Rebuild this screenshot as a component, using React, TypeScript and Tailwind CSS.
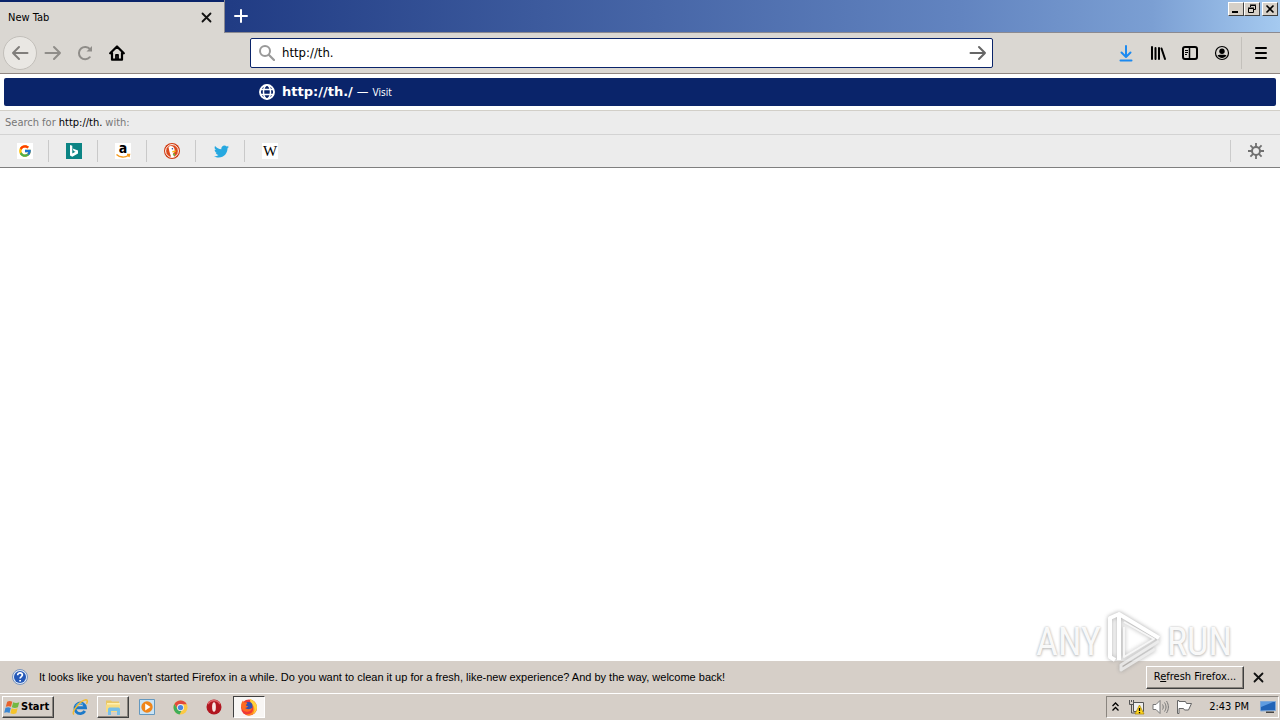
import React from "react";
import { FaTwitter } from "react-icons/fa";
import { FcGoogle } from "react-icons/fc";

interface IconButtonProps {
  label: string;
  className?: string;
  children: React.ReactNode;
}

function IconButton({ label, className = "", children }: IconButtonProps) {
  return (
    <button type="button" aria-label={label} className={`flex h-8 w-8 shrink-0 items-center justify-center ${className}`}>
      {children}
    </button>
  );
}

function WindowButton({ label, className = "", children }: IconButtonProps) {
  return (
    <button
      type="button"
      aria-label={label}
      className={`flex h-3.5 w-4 items-center justify-center border border-t-white border-l-white border-r-[#404040] border-b-[#404040] bg-[#d6d0c8] ${className}`}
    >
      {children}
    </button>
  );
}

function ArrowIcon({ className = "" }: { className?: string }) {
  return (
    <svg width="18" height="18" viewBox="0 0 18 18" fill="none" stroke="currentColor" strokeWidth="2" strokeLinecap="round" strokeLinejoin="round" className={className}>
      <path d="M16.500 9H2M8 3 2 9l6 6" />
    </svg>
  );
}

function CloseIcon() {
  return (
    <svg width="11" height="11" viewBox="0 0 11 11" stroke="#111" strokeWidth="1.800" strokeLinecap="round">
      <path d="M1.500 1.500l8 8M9.500 1.500l-8 8" />
    </svg>
  );
}

function BingIcon() {
  return (
    <svg width="16" height="16" viewBox="0 0 16 16">
      <path fill="#0b8484" d="M0 0h16v16H0z" />
      <path fill="#fff" d="M4 2l2.300.8v7.600l3.200-1.700-1.800-.8-1-2.400 5.300 2v2.900L6.300 13.700 4 12.400z" />
    </svg>
  );
}

function AmazonIcon() {
  return (
    <span className="relative flex h-4 w-4 justify-center bg-white text-[14px] leading-[11px] font-bold text-black">
      a
      <svg width="16" height="16" viewBox="0 0 16 16" className="absolute inset-0" fill="none" stroke="#f59a1b" strokeWidth="1.400">
        <path d="M1.500 11.500c3.500 3.300 8.500 3.200 12 1M12 11.500h2.500l-.6 2.500" />
      </svg>
    </span>
  );
}

function DuckIcon() {
  return (
    <svg width="16" height="16" viewBox="0 0 16 16">
      <circle cx="8" cy="8" r="8" fill="#d03a10" />
      <circle cx="8" cy="8" r="6.400" fill="#dc4a1c" stroke="#fff" strokeWidth="1" />
      <path fill="#fff" d="M4.500 4C6.500 2.300 9.800 3 10.500 6l.2 3-1.600 1.300 1.200 3.600-3 .3C6.300 11 5.200 8.500 5 6.500z" />
      <path fill="#f9b913" d="M8.300 8l3.900-.5-.8 1.500-3 .6z" />
      <circle cx="8.400" cy="5.800" r=".8" fill="#2d4f8e" />
      <path fill="#65bc46" d="M8.700 11l2.300-.5v2.200l-1.700-.3z" />
    </svg>
  );
}

function ChromeIcon() {
  return (
    <svg width="15" height="15" viewBox="0 0 16 16">
      <circle cx="8" cy="8" r="7.500" fill="#fbc945" />
      <path fill="#e2493d" d="M1.500 4.300A7.500 7.500 0 0 1 14.600 4.500H8a3.500 3.500 0 0 0-3.200 4.900z" />
      <path fill="#3fae5a" d="M1.500 4.300 4.900 9.800A3.500 3.500 0 0 0 9 11.400l-2 4A7.500 7.500 0 0 1 1.500 4.300z" />
      <circle cx="8" cy="8" r="3.700" fill="#f1f1f1" />
      <circle cx="8" cy="8" r="2.800" fill="#4a86e0" />
    </svg>
  );
}

function FirefoxIcon() {
  return (
    <svg width="18" height="18" viewBox="0 0 18 18">
      <circle cx="9" cy="9.500" r="8" fill="#f03a35" />
      <path fill="#ff8a1f" d="M10 1c1 2 4 2.500 5.600 5.500 1.500 2.500 1.500 6-1 8.500-2.600 2.600-7 3.200-9.600 1.200 5 1 8.500-2 8-6C12.800 7 9.500 5 10 1z" />
      <path fill="#ffd43a" d="M10 1c3.500 1 7 4.500 7 8.300 0 3.700-2.500 6-4.500 6.900 2-2.500 2.500-5 1.300-7.600C12.800 6.300 9.800 4.500 10 1z" />
      <circle cx="8.500" cy="8" r="4" fill="#3551b0" />
      <path fill="#ff6b22" d="M1.200 8C1 5.500 2 3.500 3 2.500c.2 1 .7 1.700 1.300 2 1.500-.5 2.500 0 3 .8L6 7c-.2 1 1.500 1 2 1-.5 2-2 1.500-2.800 2 1.500 1.500 5 1.700 7-.3-.3 3.500-5 4.800-7.700 3.600C2.500 12.300 1.300 10.500 1.200 8z" />
    </svg>
  );
}

const engines = [
  { name: "Google", icon: <span className="flex h-4 w-4 items-center justify-center bg-white"><FcGoogle size={14} /></span> },
  { name: "Bing", icon: <BingIcon /> },
  { name: "Amazon.com", icon: <AmazonIcon /> },
  { name: "DuckDuckGo", icon: <DuckIcon /> },
  { name: "Twitter", icon: <FaTwitter size={15} color="#26a8e0" /> },
  {
    name: "Wikipedia",
    icon: <span className="flex h-4 w-4 items-center justify-center bg-white font-['Liberation_Serif',serif] text-[15px] leading-4 text-black">W</span>,
  },
];

function TitleBar() {
  return (
    <header className="flex h-[33px] items-start bg-[linear-gradient(90deg,#0a246a_0%,#213c84_18%,#6284c0_75%,#7b9fd3_90%,#a5caf0_100%)]">
      <div className="flex h-full w-56 items-center justify-between border-t-2 border-[#0a246a] bg-[#dad7d2] px-2">
        <span>New Tab</span>
        <button type="button" aria-label="Close tab" className="flex h-5 w-[19px] items-center justify-center">
          <CloseIcon />
        </button>
      </div>
      <div className="flex h-full flex-1 items-start justify-between border-b border-l border-[#8b8a91]">
        <button type="button" aria-label="New tab" className="flex h-8 w-8 items-center justify-center">
          <svg width="14" height="14" viewBox="0 0 14 14" stroke="#fff" strokeWidth="2" strokeLinecap="round">
            <path d="M7 1v12M1 7h12" />
          </svg>
        </button>
        <div className="flex pt-0.5 pr-0.5">
          <WindowButton label="Minimize">
            <svg width="10" height="10" viewBox="0 0 10 10"><path d="M1 7h6v2H1z" /></svg>
          </WindowButton>
          <WindowButton label="Restore">
            <svg width="10" height="10" viewBox="0 0 10 10" fill="none" stroke="#000">
              <path d="M3.500 3V1.500h5v4H7M3 1h6M1.500 4.500h5v4h-5zM1 4h6" />
            </svg>
          </WindowButton>
          <WindowButton label="Close" className="ml-0.5">
            <svg width="10" height="10" viewBox="0 0 10 10" stroke="#000" strokeWidth="1.600"><path d="M1.500 1.500l7 7M8.500 1.500l-7 7" /></svg>
          </WindowButton>
        </div>
      </div>
    </header>
  );
}

function NavBar() {
  return (
    <nav className="flex h-[41px] items-center border-b border-[#8f8682] bg-[#dad7d2] pl-[3px]">
      <button type="button" aria-label="Back" className="flex h-[34px] w-[34px] items-center justify-center rounded-full border border-[#c2bfba] bg-[#e9e7e3] text-[#807e7b]">
        <ArrowIcon />
      </button>
      <IconButton label="Forward" className="text-[#8f8d89]">
        <ArrowIcon className="rotate-180" />
      </IconButton>
      <IconButton label="Reload">
        <svg width="16" height="16" viewBox="0 0 16 16" fill="none" stroke="#8f8d89" strokeWidth="2" strokeLinecap="round">
          <path d="M12.800 12.200A6.200 6.200 0 1 1 13 4.200" />
          <path d="M15 1v5.500H9.500z" fill="#8f8d89" stroke="none" />
        </svg>
      </IconButton>
      <IconButton label="Home">
        <svg width="16" height="16" viewBox="0 0 16 16" fill="none" stroke="#000" strokeWidth="2.200" strokeLinecap="round" strokeLinejoin="round">
          <path d="M1.200 8.300 8 1.500l6.800 6.800M3 8v6.700h10V8" />
          <path d="M7 14V9.800h2V14" strokeWidth="1.800" />
        </svg>
      </IconButton>
      <div className="w-[117px]" />
      <form className="flex h-[30px] flex-1 items-center rounded-xs border border-[#0a246a] bg-white pr-[5px] pl-2">
        <svg width="16" height="16" viewBox="0 0 16 16" fill="none" stroke="#999" strokeWidth="2" strokeLinecap="round">
          <circle cx="6" cy="6" r="5" />
          <path d="M10 10l5 5" strokeWidth="2.200" />
        </svg>
        <input type="text" aria-label="Search or enter address" defaultValue="http://th." className="ml-[7px] min-w-0 flex-1 bg-transparent text-[13px] text-black outline-none" />
        <button type="button" aria-label="Go" className="text-[#666]">
          <ArrowIcon className="rotate-180" />
        </button>
      </form>
      <div className="w-[117px]" />
      <IconButton label="Downloads">
        <svg width="16" height="18" viewBox="0 0 16 18" fill="none" stroke="#1c8af0" strokeWidth="2" strokeLinecap="round" strokeLinejoin="round">
          <path d="M8 2v10.500M3.500 8.500 8 13l4.500-4.500M2.500 16.500h11" />
        </svg>
      </IconButton>
      <IconButton label="Library">
        <svg width="16" height="16" viewBox="0 0 16 16" fill="none" stroke="#000" strokeWidth="2" strokeLinecap="round">
          <path d="M2 2v12M5.500 3v11M9 3v11M11.500 3.500l3.500 10.500" />
        </svg>
      </IconButton>
      <IconButton label="Sidebars">
        <svg width="16" height="16" viewBox="0 0 16 16" fill="none" stroke="#000" strokeWidth="2">
          <rect x="1" y="2" width="14" height="12" rx="2" />
          <path d="M7.500 2v12" strokeWidth="1.500" />
          <path d="M3 5.500h3M3 7.500h3M3 9.500h2" strokeWidth="1" />
        </svg>
      </IconButton>
      <IconButton label="Account">
        <svg width="16" height="16" viewBox="0 0 16 16">
          <circle cx="8" cy="8" r="6.500" fill="none" stroke="#000" strokeWidth="1.200" />
          <circle cx="8" cy="6.200" r="2.700" />
          <path d="M3.500 10.300c2.500-.6 6.500-.6 9 0-1 2-2.800 2.700-4.500 2.700s-3.500-.7-4.500-2.700z" />
        </svg>
      </IconButton>
      <div className="ml-[3px] h-8 w-px bg-[#c3c0bb]" />
      <IconButton label="Open menu" className="mr-[3px] ml-[3px]">
        <svg width="14" height="14" viewBox="0 0 14 14" stroke="#000" strokeWidth="2" strokeLinecap="round">
          <path d="M2 2h10M2 7h10M2 12h10" />
        </svg>
      </IconButton>
    </nav>
  );
}

function Suggestions() {
  return (
    <section className="border-b border-[#7f7f7f] bg-white pt-1">
      <a href="#visit" className="mx-1 flex h-7 items-center rounded-xs bg-[#0a246a] pl-[255px] text-white">
        <svg width="16" height="16" viewBox="0 0 16 16" fill="none" stroke="#fff" strokeWidth="1.500">
          <circle cx="8" cy="8" r="7" strokeWidth="1.900" />
          <ellipse cx="8" cy="8" rx="3.500" ry="7" />
          <path d="M1.500 5.500h13M1.500 10.500h13" />
        </svg>
        <span className="ml-[7px] font-['DejaVu_Sans',sans-serif] text-[13px] font-bold">http://th./</span>
        <span className="ml-1 text-[13px]">—</span>
        <span className="ml-1 pt-0.5 text-[10px]">Visit</span>
      </a>
      <div className="mt-1 border-t border-[#d2cfc8] bg-[#ececec]">
        <p className="flex h-6 items-center gap-[3px] border-b border-[#d3d3d3] px-[5px] text-[#777]">
          <span>Search for</span>
          <span className="text-black">http://th.</span>
          <span>with:</span>
        </p>
        <div className="flex h-8 items-center">
          {engines.map((engine) => (
            <div key={engine.name} className="flex items-center">
              <button type="button" aria-label={engine.name} className="flex h-8 w-12 items-center justify-center pl-0.5">
                {engine.icon}
              </button>
              {engine.name !== "Wikipedia" && <div className="h-[22px] w-px bg-[#c9c9c9]" />}
            </div>
          ))}
          <div className="ml-auto h-[22px] w-px bg-[#cbcbcb]" />
          <button type="button" aria-label="Change search settings" className="flex h-8 w-[49px] items-center justify-center">
            <svg width="16" height="16" viewBox="0 0 16 16" fill="none" stroke="#707070" strokeWidth="2">
              <circle cx="8" cy="8" r="4" />
              <path d="M8 0v4M8 12v4M0 8h4M12 8h4M2.400 2.400l2.500 2.500M11.100 11.100l2.500 2.500M2.400 13.600l2.500-2.500M11.100 4.900l2.500-2.500" strokeWidth="1.800" />
            </svg>
          </button>
        </div>
      </div>
    </section>
  );
}

function Watermark() {
  return (
    <div className="pointer-events-none absolute right-12 bottom-[18px] flex items-center gap-1 font-['Roboto_Condensed','Liberation_Sans_Narrow',sans-serif] text-[38px] leading-[64px] text-white/90 [text-shadow:0_0_2px_#bbb,0_1px_3px_#bbb]">
      <span>ANY</span>
      <svg width="58" height="66" viewBox="0 0 58 66" fill="none" stroke="#fff" strokeWidth="4" strokeLinejoin="round" className="opacity-85 drop-shadow-[0_0_2px_#999]">
        <path d="M14 5 5 9v39l5 3M14 51V5l40 24" />
        <path d="M19 18v30l30-18-30-17" stroke="#f5f5f5" strokeWidth="2" />
        <path d="M54 32 16 56v5l34-21" stroke="#e9e9e9" strokeWidth="3" />
      </svg>
      <span>RUN</span>
    </div>
  );
}

function RefreshNotice() {
  return (
    <aside className="relative flex h-8 items-center bg-[#d6cfc8] pr-3.5 pl-3">
      <svg width="16" height="16" viewBox="0 0 16 16">
        <circle cx="8" cy="8" r="7.500" fill="#dfe8f5" stroke="#7793bd" />
        <circle cx="8" cy="8" r="6" fill="#2458b8" />
        <path d="M5.700 6.200c0-3.200 4.900-2.900 4.700-.1 0 1.500-2.300 1.500-2.300 3.400M8.100 11v1.500" fill="none" stroke="#fff" strokeWidth="1.700" />
      </svg>
      <p className="ml-[11px] font-['Liberation_Sans',sans-serif] whitespace-nowrap text-black">
        It looks like you haven't started Firefox in a while. Do you want to clean it up for a fresh, like-new experience? And by the way, welcome back!
      </p>
      <Watermark />
      <button type="button" className="relative mr-[7px] ml-auto h-[23px] w-[98px] border border-t-white border-l-white border-r-[#404040] border-b-[#404040] bg-[#d6cfc8] whitespace-nowrap text-black shadow-[inset_-1px_-1px_#8a857f]">
        R<u>e</u>fresh Firefox...
      </button>
      <button type="button" aria-label="Close notice" className="relative flex h-5 w-[15px] items-center justify-center">
        <CloseIcon />
      </button>
    </aside>
  );
}

function Taskbar() {
  return (
    <footer className="flex h-[27px] items-center border-t border-white bg-[#d6cfc8] pr-px pl-0.5">
      <button type="button" className="flex h-[22px] w-[52px] items-center border border-t-white border-l-white border-r-[#404040] border-b-[#404040] pl-px text-[11px] font-bold text-black shadow-[inset_-1px_-1px_#8a857f]">
        <svg width="17" height="17" viewBox="0 0 16 16" className="shrink-0">
          <path fill="#e8622c" d="M3 2.500c1.700-1 3.300-.9 4.800.2L6.600 7.400C5 6.500 3.500 6.500 1.700 7.300z" />
          <path fill="#74b843" d="M8.600 3c1.800 1 3.600 1 5.800 0l-1.300 4.700c-2 1-3.900.9-5.700 0z" />
          <path fill="#3b87d3" d="M1.400 8.300c1.800-.9 3.400-.8 5 .1l-1.200 4.700C3.500 12.200 1.900 12.200.2 13z" />
          <path fill="#f5c32b" d="M7.200 8.800c1.900 1 3.700.9 5.600 0L11.600 13.500c-1.900 1-3.800.9-5.600 0z" />
        </svg>
        Start
      </button>
      <div className="ml-2.5 flex items-center">
        <IconButton label="Internet Explorer" className="h-[22px]">
          <svg width="18" height="18" viewBox="0 0 18 18" fill="none">
            <path d="M13.800 13A5.300 5.300 0 1 1 14.500 9.800H5" stroke="#1d79c8" strokeWidth="2.900" />
            <path d="M5 7.500c1-2 5-3 7-1" stroke="#72c4ee" strokeWidth="1" />
            <path d="M3 16.500C0 14 9 2.500 15 1.800c1.800 0 1.500 2 .5 4" stroke="#f0ba32" strokeWidth="1.500" />
          </svg>
        </IconButton>
        <button type="button" aria-label="Windows Explorer" className="mx-px flex h-[22px] w-8 items-center justify-center border border-t-white border-l-white border-r-[#404040] border-b-[#404040] shadow-[inset_-1px_-1px_#8a857f]">
          <svg width="18" height="18" viewBox="0 0 18 18">
            <path fill="#e9c766" d="M2 2.500h5l1 1h7V14H2z" />
            <path fill="#fff0b0" d="M3 5h13v9H3z" />
            <path fill="#f7dc82" d="M2 6.500h14V14H2z" />
            <path fill="#77bfe8" d="M4 17v-5.500C4 10 5 9.500 6 9.500h8c1 0 2 .5 2 2V17h-3v-4H7v4z" />
          </svg>
        </button>
        <IconButton label="Media Player" className="ml-px h-[22px]">
          <svg width="16" height="16" viewBox="0 0 16 16">
            <path fill="#c9e3f5" stroke="#6498bf" d="M.5 .5h15v15H.5z" />
            <circle cx="8" cy="8" r="5.700" fill="#f08519" />
            <path fill="#fff" d="M6.200 4.500 11.500 8l-5.300 3.500z" />
          </svg>
        </IconButton>
        <IconButton label="Chrome" className="ml-px h-[22px]">
          <ChromeIcon />
        </IconButton>
        <IconButton label="Opera" className="ml-0.5 h-[22px]">
          <svg width="16" height="16" viewBox="0 0 16 16">
            <circle cx="8" cy="8" r="7.500" fill="#b11620" />
            <path d="M2 5a7 7 0 0 1 12 0" stroke="#df6369" strokeWidth="1.500" fill="none" />
            <ellipse cx="8" cy="8" rx="1.900" ry="4.700" fill="#f8e5e3" />
          </svg>
        </IconButton>
        <button type="button" aria-label="Firefox" className="ml-[3px] flex h-[22px] w-8 items-center justify-center border border-t-[#404040] border-l-[#404040] border-r-white border-b-white bg-[#f8f6f4]">
          <FirefoxIcon />
        </button>
      </div>
      <div className="ml-auto flex h-[22px] items-center border border-t-[#8a857f] border-l-[#8a857f] border-r-white border-b-white pr-0.5 pl-[5px] text-black">
        <svg width="7" height="10" viewBox="0 0 7 10" fill="none" stroke="#000" strokeWidth="1.300">
          <path d="M.5 4l3-3 3 3M.5 8.500l3-3 3 3" />
        </svg>
        <svg width="17" height="16" viewBox="0 0 17 16" className="ml-[9px]">
          <path fill="#eee" stroke="#555" d="M5.500 3.500h10v9h-10z" />
          <path fill="none" stroke="#555" d="M1.500 1v4.500h4V1M3.500 1v2M3.500 6v8h4" />
          <path fill="#ffd51f" stroke="#a78300" strokeWidth=".7" d="M11.500 6 16 15H7z" />
          <path stroke="#000" strokeWidth="1.300" d="M11.500 9v3M11.500 13v1.200" />
        </svg>
        <svg width="17" height="16" viewBox="0 0 17 16" fill="none" stroke="#777" className="ml-[7px]">
          <path fill="#fff" d="M1 5.500h3l4-4v13l-4-4H1z" />
          <path d="M10.500 5.500c1 1.500 1 3.500 0 5M12.500 3.500c2 3 2 6 0 9M14.500 2c2.500 4 2.500 8 0 12" />
        </svg>
        <svg width="17" height="16" viewBox="0 0 17 16" fill="#fff" stroke="#666" className="ml-[7px]">
          <path d="M1.500 1.500v13h1.500V9.500h4.500l1 1.500h4l3-6.500h-5l-1-2H3v-1z" />
        </svg>
        <time className="ml-4 whitespace-nowrap">2:43 PM</time>
        <svg width="16" height="16" viewBox="0 0 16 16" className="ml-[11px]">
          <path fill="#2264b7" stroke="#7fa8d8" d="M.5 2.500h15v9L.5 12z" />
          <path fill="#5f9ce0" d="M1 3h12L1 8z" />
          <path fill="#444" d="M6 12.500h8V14H6z" />
        </svg>
      </div>
    </footer>
  );
}

export default function App() {
  return (
    <div className="flex min-h-screen flex-col bg-white font-['DejaVu_Sans_Condensed','DejaVu_Sans',sans-serif] text-[11px] leading-4 text-black">
      <TitleBar />
      <NavBar />
      <Suggestions />
      <main className="flex-1" />
      <RefreshNotice />
      <Taskbar />
    </div>
  );
}
